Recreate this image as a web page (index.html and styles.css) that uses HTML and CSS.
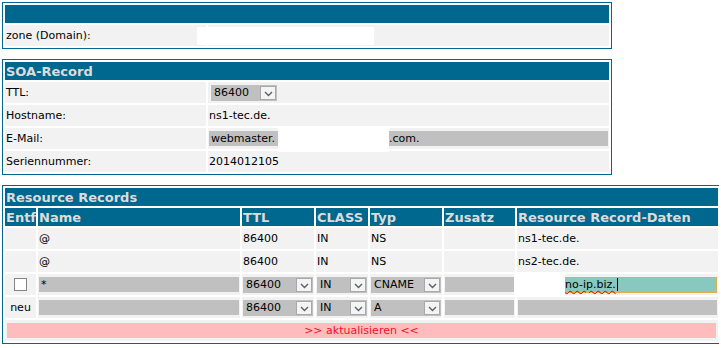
FILE: index.html
```html
<!DOCTYPE html>
<html lang="de">
<head>
    <meta charset="UTF-8" />
    <title>Zone bearbeiten</title>
    <link rel="stylesheet" href="styles.css">
</head>
<body>
    <table class="box box-small">
        <colgroup><col class="c-label"><col></colgroup>
        <tr><th class="title" colspan="2"></th></tr>
        <tr>
            <td>zone (Domain):</td>
            <td><span class="redact r-zone"></span></td>
        </tr>
    </table>

    <table class="box box-small">
        <colgroup><col class="c-label"><col></colgroup>
        <tr><th class="title" colspan="2">SOA-Record</th></tr>
        <tr>
            <td>TTL:</td>
            <td>
                <div class="sel sel-soa">
                    <span class="val">86400</span>
                    <span class="btn"><svg width="9" height="6" viewBox="0 0 9 6"><polyline points="1,1 4.5,4.5 8,1" /></svg></span>
                </div>
            </td>
        </tr>
        <tr>
            <td>Hostname:</td>
            <td>ns1-tec.de.</td>
        </tr>
        <tr>
            <td>E-Mail:</td>
            <td>
                <div class="inp inp-mail">webmaster.<span class="redact r-mail"></span>.com.</div>
            </td>
        </tr>
        <tr>
            <td>Seriennummer:</td>
            <td>2014012105</td>
        </tr>
    </table>

    <table class="box box-wide">
        <colgroup>
            <col class="c-entf">
            <col class="c-name">
            <col class="c-ttl">
            <col class="c-class">
            <col class="c-typ">
            <col class="c-zusatz">
            <col>
        </colgroup>
        <tr><th class="title" colspan="7">Resource Records</th></tr>
        <tr>
            <th class="head">Entf</th>
            <th class="head">Name</th>
            <th class="head">TTL</th>
            <th class="head">CLASS</th>
            <th class="head">Typ</th>
            <th class="head">Zusatz</th>
            <th class="head">Resource Record-Daten</th>
        </tr>
        <tr>
            <td></td>
            <td>@</td>
            <td>86400</td>
            <td>IN</td>
            <td>NS</td>
            <td></td>
            <td>ns1-tec.de.</td>
        </tr>
        <tr>
            <td></td>
            <td>@</td>
            <td>86400</td>
            <td>IN</td>
            <td>NS</td>
            <td></td>
            <td>ns2-tec.de.</td>
        </tr>
        <tr>
            <td class="center"><input type="checkbox" class="check" /></td>
            <td><div class="inp">*</div></td>
            <td>
                <div class="sel">
                    <span class="val">86400</span>
                    <span class="btn"><svg width="9" height="6" viewBox="0 0 9 6"><polyline points="1,1 4.5,4.5 8,1" /></svg></span>
                </div>
            </td>
            <td>
                <div class="sel">
                    <span class="val">IN</span>
                    <span class="btn"><svg width="9" height="6" viewBox="0 0 9 6"><polyline points="1,1 4.5,4.5 8,1" /></svg></span>
                </div>
            </td>
            <td>
                <div class="sel">
                    <span class="val">CNAME</span>
                    <span class="btn"><svg width="9" height="6" viewBox="0 0 9 6"><polyline points="1,1 4.5,4.5 8,1" /></svg></span>
                </div>
            </td>
            <td><div class="inp"></div></td>
            <td>
                <div class="inp focus"><span class="redact r-data"></span><span class="typo">no-ip.biz.</span><span class="caret"></span></div>
            </td>
        </tr>
        <tr>
            <td class="center">neu</td>
            <td><div class="inp"></div></td>
            <td>
                <div class="sel">
                    <span class="val">86400</span>
                    <span class="btn"><svg width="9" height="6" viewBox="0 0 9 6"><polyline points="1,1 4.5,4.5 8,1" /></svg></span>
                </div>
            </td>
            <td>
                <div class="sel">
                    <span class="val">IN</span>
                    <span class="btn"><svg width="9" height="6" viewBox="0 0 9 6"><polyline points="1,1 4.5,4.5 8,1" /></svg></span>
                </div>
            </td>
            <td>
                <div class="sel">
                    <span class="val">A</span>
                    <span class="btn"><svg width="9" height="6" viewBox="0 0 9 6"><polyline points="1,1 4.5,4.5 8,1" /></svg></span>
                </div>
            </td>
            <td><div class="inp"></div></td>
            <td><div class="inp"></div></td>
        </tr>
        <tr>
            <td colspan="7" class="submit-cell">
                <button class="submit">&gt;&gt; aktualisieren &lt;&lt;</button>
            </td>
        </tr>
    </table>
</body>
</html>
```

FILE: styles.css
```css
html {
    overflow: hidden;
}

body {
    margin: 2px;
    font-family: "DejaVu Sans", Verdana, sans-serif;
    font-size: 11px;
    color: #000;
    background-color: #fff;
}

.box {
    border: 1px solid #00678f;
    border-spacing: 2px;
    table-layout: fixed;
    margin-bottom: 10px;
}

.box-small {
    width: 610px;
}

.box-wide {
    width: 719px;
    margin-bottom: 0;
}

.c-label { width: 201px; }
.c-entf { width: 31px; }
.c-name { width: 202px; }
.c-ttl { width: 72px; }
.c-class { width: 52px; }
.c-typ { width: 72px; }
.c-zusatz { width: 71px; }

.box th {
    background-color: #00678f;
    color: #dcdcdc;
    font-size: 13px;
    font-weight: bold;
    text-align: left;
    padding: 0 1px;
    height: 18px;
    white-space: nowrap;
    overflow: hidden;
}

.box td {
    background-color: #f2f2f2;
    padding: 0 1px;
    height: 21px;
    white-space: nowrap;
}

.box td.center {
    text-align: center;
}

/* fake form fields, old IE look */
.inp {
    height: 15px;
    line-height: 15px;
    background-color: #c0c0c0;
    padding: 0 2px;
}

.inp-mail {
    height: 15px;
}

.inp.focus {
    background-color: #88c8bf;
    border: 1px solid #e0b050;
    height: 14px;
    line-height: 14px;
    padding-left: 0;
}

.typo {
    text-decoration: underline wavy #e00000;
    text-decoration-thickness: 1px;
    text-underline-offset: 2px;
}

.caret {
    display: inline-block;
    width: 1px;
    height: 13px;
    background-color: #000;
    vertical-align: middle;
    margin-left: 1px;
}

.sel {
    display: flex;
    align-items: center;
    height: 16px;
    background-color: #c0c0c0;
    padding: 0 1px 0 3px;
}

.sel-soa {
    width: 62px;
    margin-left: 2px;
}

.sel .val {
    flex: 1;
}

.sel .btn {
    width: 14px;
    height: 12px;
    background-color: #f4f4f4;
    border: 1px solid #a8a8a8;
    display: flex;
    align-items: center;
    justify-content: center;
}

.sel .btn svg {
    fill: none;
    stroke: #5a6070;
    stroke-width: 1.4;
    margin-top: 2px;
}

.check {
    appearance: none;
    width: 13px;
    height: 13px;
    margin: 0;
    border: 1px solid #858585;
    background-color: #fff;
    vertical-align: middle;
}

.submit-cell {
    padding: 0 2px !important;
}

.submit {
    display: block;
    width: 100%;
    height: 15px;
    border: none;
    padding: 0;
    background-color: #ffbcbc;
    color: #f0102c;
    font-family: "DejaVu Sans", Verdana, sans-serif;
    font-size: 11px;
    cursor: pointer;
}

/* white blobs that hide the domain */
.redact {
    display: inline-block;
    background-color: #fff;
    vertical-align: middle;
}

.r-zone {
    width: 177px;
    height: 18px;
    margin-left: -12px;
}

.r-mail {
    width: 111px;
    height: 15px;
    margin-left: 3px;
    box-shadow: 0 -5px 0 #fff, 0 5px 0 #fff;
}

.r-data {
    width: 51px;
    height: 14px;
    margin-left: -5px;
    box-shadow: 0 -6px 0 #fff, 0 5px 0 #fff;
}
```
